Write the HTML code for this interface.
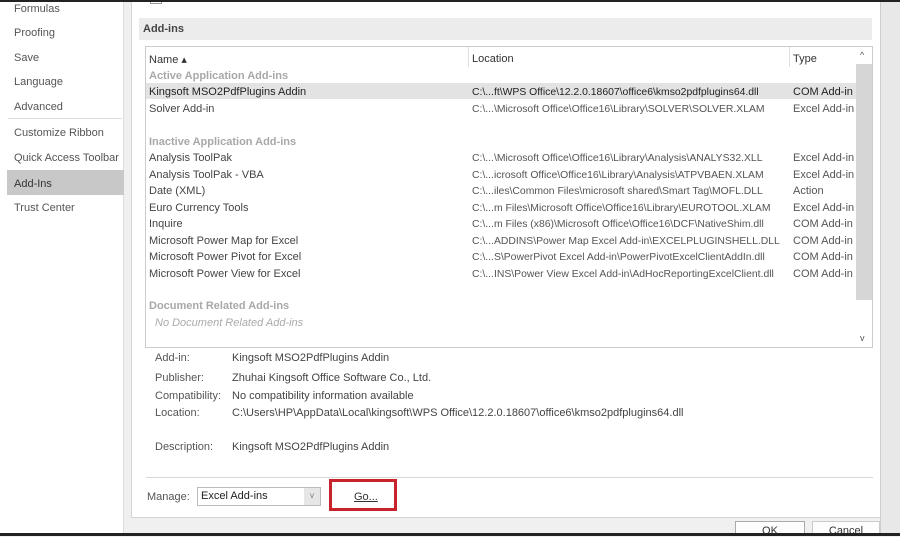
<!DOCTYPE html>
<html><head><style>
*{margin:0;padding:0;box-sizing:border-box}
body{width:900px;height:536px;overflow:hidden;background:#f0f0f0;font-family:"Liberation Sans",sans-serif;font-size:11px;color:#333;position:relative}
.a{position:absolute;white-space:nowrap}
.side{left:0;top:0;width:124px;height:536px;background:#fff;border-right:1px solid #ddd}
.side div{position:absolute;left:14px;color:#555;font-size:11px}
.main{left:131px;top:0;width:750px;height:518px;background:#fff;border:1px solid #d4d4d4;border-top:none}
.r{position:absolute;left:149px;color:#444;margin-top:2px}
.l{position:absolute;left:472px;color:#555;font-size:10.4px;margin-top:3px}
.t{position:absolute;left:793px;color:#555;margin-top:2px}
.g{color:#a8a8a8;font-weight:bold}
.lab{position:absolute;left:155px;color:#555;margin-top:1px}
.val{position:absolute;left:232px;color:#444;margin-top:1px}
</style></head><body>
<div class="a" style="left:0;top:0;width:900px;height:2px;background:#222;z-index:5"></div>
<div class="a" style="left:0;top:533px;width:900px;height:3px;background:#222;z-index:5"></div>
<div class="a side">
<div style="top:3px">Formulas</div>
<div style="top:27px">Proofing</div>
<div style="top:52px">Save</div>
<div style="top:76px">Language</div>
<div style="top:101px">Advanced</div>
<div style="left:8px;top:118px;width:114px;height:1px;background:#ddd"></div>
<div style="top:127px">Customize Ribbon</div>
<div style="top:152px">Quick Access Toolbar</div>
<div style="left:7px;top:170px;width:117px;height:25px;background:#c8c8c8"></div>
<div style="top:178px;color:#333">Add-Ins</div>
<div style="top:202px">Trust Center</div>
</div>
<div class="a main"></div>
<div class="a" style="left:150px;top:0;width:12px;height:4px;border:1px solid #999;border-top:none"></div>
<div class="a" style="left:139px;top:18px;width:733px;height:22px;background:#ececec"></div>
<div class="a" style="left:143px;top:23px;font-weight:bold;color:#444">Add-ins</div>
<div class="a" style="left:145px;top:46px;width:728px;height:302px;border:1px solid #ccc;background:#fff"></div>
<div class="a" style="left:468px;top:47px;width:1px;height:20px;background:#e0e0e0"></div>
<div class="a" style="left:789px;top:47px;width:1px;height:20px;background:#e0e0e0"></div>
<div class="a" style="left:856px;top:64px;width:16px;height:236px;background:#d6d6d6"></div>
<div class="a" style="left:860px;top:50px;color:#555;font-size:9px">^</div>
<div class="a" style="left:860px;top:333px;color:#555;font-size:9px">v</div>
<div class="a" style="left:146px;top:83px;width:710px;height:16px;background:#e3e3e3"></div>
<div class="r" style="top:51px;color:#333">Name ▴</div>
<div class="l" style="top:50px;color:#333;font-size:11px">Location</div>
<div class="t" style="top:51px;color:#333">Type</div>
<div class="r g" style="top:68px">Active Application Add-ins</div>
<div class="r" style="top:84px;color:#222">Kingsoft MSO2PdfPlugins Addin</div><div class="l" style="top:84px;color:#222">C:\...ft\WPS Office\12.2.0.18607\office6\kmso2pdfplugins64.dll</div><div class="t" style="top:84px;color:#222">COM Add-in</div>
<div class="r" style="top:101px">Solver Add-in</div><div class="l" style="top:101px">C:\...\Microsoft Office\Office16\Library\SOLVER\SOLVER.XLAM</div><div class="t" style="top:101px">Excel Add-in</div>
<div class="r g" style="top:134px">Inactive Application Add-ins</div>
<div class="r" style="top:150px">Analysis ToolPak</div><div class="l" style="top:150px">C:\...\Microsoft Office\Office16\Library\Analysis\ANALYS32.XLL</div><div class="t" style="top:150px">Excel Add-in</div>
<div class="r" style="top:167px">Analysis ToolPak - VBA</div><div class="l" style="top:167px">C:\...icrosoft Office\Office16\Library\Analysis\ATPVBAEN.XLAM</div><div class="t" style="top:167px">Excel Add-in</div>
<div class="r" style="top:183px">Date (XML)</div><div class="l" style="top:183px">C:\...iles\Common Files\microsoft shared\Smart Tag\MOFL.DLL</div><div class="t" style="top:183px">Action</div>
<div class="r" style="top:200px">Euro Currency Tools</div><div class="l" style="top:200px">C:\...m Files\Microsoft Office\Office16\Library\EUROTOOL.XLAM</div><div class="t" style="top:200px">Excel Add-in</div>
<div class="r" style="top:216px">Inquire</div><div class="l" style="top:216px">C:\...m Files (x86)\Microsoft Office\Office16\DCF\NativeShim.dll</div><div class="t" style="top:216px">COM Add-in</div>
<div class="r" style="top:233px">Microsoft Power Map for Excel</div><div class="l" style="top:233px">C:\...ADDINS\Power Map Excel Add-in\EXCELPLUGINSHELL.DLL</div><div class="t" style="top:233px">COM Add-in</div>
<div class="r" style="top:249px">Microsoft Power Pivot for Excel</div><div class="l" style="top:249px">C:\...S\PowerPivot Excel Add-in\PowerPivotExcelClientAddIn.dll</div><div class="t" style="top:249px">COM Add-in</div>
<div class="r" style="top:266px">Microsoft Power View for Excel</div><div class="l" style="top:266px">C:\...INS\Power View Excel Add-in\AdHocReportingExcelClient.dll</div><div class="t" style="top:266px">COM Add-in</div>
<div class="r g" style="top:298px">Document Related Add-ins</div>
<div class="r" style="top:315px;left:155px;color:#aaa;font-style:italic">No Document Related Add-ins</div>
<div class="lab" style="top:351px">Add-in:</div><div class="val" style="top:351px">Kingsoft MSO2PdfPlugins Addin</div>
<div class="lab" style="top:371px">Publisher:</div><div class="val" style="top:371px">Zhuhai Kingsoft Office Software Co., Ltd.</div>
<div class="lab" style="top:389px">Compatibility:</div><div class="val" style="top:389px">No compatibility information available</div>
<div class="lab" style="top:406px">Location:</div><div class="val" style="top:406px">C:\Users\HP\AppData\Local\kingsoft\WPS Office\12.2.0.18607\office6\kmso2pdfplugins64.dll</div>
<div class="lab" style="top:440px">Description:</div><div class="val" style="top:440px">Kingsoft MSO2PdfPlugins Addin</div>
<div class="a" style="left:146px;top:477px;width:727px;height:1px;background:#d8d8d8"></div>
<div class="a" style="left:147px;top:491px;color:#555">Manage:</div>
<div class="a" style="left:197px;top:487px;width:124px;height:19px;border:1px solid #bbb;background:#fff"></div>
<div class="a" style="left:201px;top:490px;color:#222">Excel Add-ins</div>
<div class="a" style="left:304px;top:488px;width:16px;height:17px;background:#e6e6e6;color:#777;font-size:8px;text-align:center;line-height:16px">v</div>
<div class="a" style="left:329px;top:479px;width:68px;height:32px;border:3px solid #c8232c;background:#fff"></div>
<div class="a" style="left:354px;top:491px;color:#333;text-decoration:underline">Go...</div>
<div class="a" style="left:880px;top:0;width:20px;height:536px;background:#e8e8e8;border-left:1px solid #ccc"></div>
<div class="a" style="left:735px;top:521px;width:70px;height:14px;border:1px solid #aaa;background:#fdfdfd;text-align:center;color:#333;padding-top:3px">OK</div>
<div class="a" style="left:812px;top:521px;width:68px;height:14px;border:1px solid #ccc;background:#fdfdfd;text-align:center;color:#333;padding-top:3px">Cancel</div>
</body></html>
